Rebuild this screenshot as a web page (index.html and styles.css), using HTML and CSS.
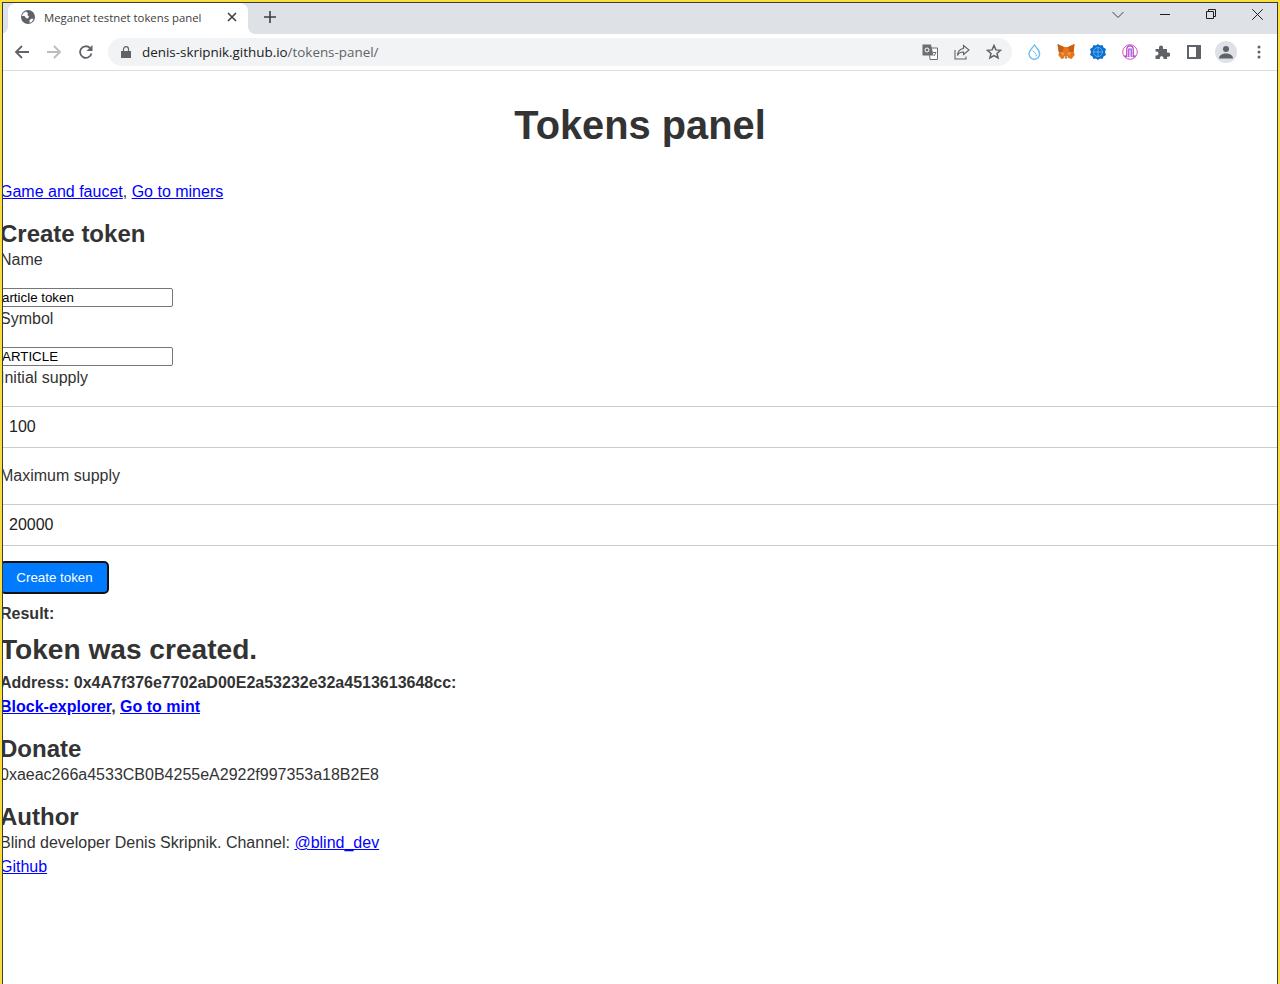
FILE: index.html
```html
<!DOCTYPE html>
<html lang="en">
<head>
<meta charset="utf-8">
<title>Meganet testnet tokens panel</title>
<link rel="stylesheet" href="styles.css">
</head>
<body>
<div class="window">
  <header class="tabstrip">
    <div class="tab">
      <svg class="favicon" viewBox="0 0 16 16" width="16" height="16"><circle cx="8" cy="8" r="7" fill="#5f6368"/><path d="M3 4.200 6 2.500l2 1.700-.6 1.800L9 7.500 8 9.500 6 9 4.500 7 2 7zM9.500 11l2.500-1.500 1.500.7-1.800 2.800-2 .8z" fill="#fff"/></svg>
      <span class="tab-title">Meganet testnet tokens panel</span>
      <svg class="tab-close" viewBox="0 0 10 10" width="10" height="10"><path d="M1 1l8 8M9 1l-8 8" stroke="#3c4043" stroke-width="1.600"/></svg>
    </div>
    <svg class="new-tab" viewBox="0 0 12 12" width="12" height="12"><path d="M6 0v12M0 6h12" stroke="#3c4043" stroke-width="1.600"/></svg>
    <div class="win-controls">
      <svg viewBox="0 0 12 12" width="12" height="12"><path d="M.5 3 6 8.500 11.500 3" fill="none" stroke="#3c4043"/></svg>
      <svg viewBox="0 0 10 10" width="10" height="10"><path d="M0 5.500h10" stroke="#1f1f1f"/></svg>
      <svg viewBox="0 0 10 10" width="10" height="10"><path d="M.5 2.500h7v7h-7zM2.500 2.500v-2h7v7h-2" fill="none" stroke="#1f1f1f"/></svg>
      <svg viewBox="0 0 10 10" width="11" height="11"><path d="M.2.2l9.600 9.600M9.800.2.200 9.800" stroke="#1f1f1f" stroke-width=".9"/></svg>
    </div>
  </header>
  <nav class="toolbar">
    <svg class="nav-icon" viewBox="0 0 16 16" width="16" height="16"><path d="M15 8H2M8 2 2 8l6 6" fill="none" stroke="#5f6368" stroke-width="1.800"/></svg>
    <svg class="nav-icon" viewBox="0 0 16 16" width="16" height="16"><path d="M1 8h13M8 2l6 6-6 6" fill="none" stroke="#babcbe" stroke-width="1.800"/></svg>
    <svg class="nav-icon" viewBox="0 0 16 16" width="16" height="16"><path d="M13.500 9.500A5.800 5.800 0 1 1 12 4" fill="none" stroke="#5f6368" stroke-width="1.800"/><path d="M14.500 1v6h-6z" fill="#5f6368"/></svg>
    <div class="omnibox">
      <svg viewBox="0 0 10 12" width="10" height="12"><path d="M0 5h10v7H0z" fill="#5f6368"/><path d="M2.500 5V3.200a2.500 2.500 0 0 1 5 0V5" fill="none" stroke="#5f6368" stroke-width="1.200"/></svg>
      <span class="url"><span class="host">denis-skripnik.github.io</span>/tokens-panel/</span>
      <div class="omni-actions">
        <svg viewBox="0 0 16 16" width="16" height="16"><path d="M7 4h8.500v11.500H8z" fill="#fff" stroke="#6b6f73"/><path d="M.5.500h8.500l2.500 11H.5z" fill="#6b6f73"/><circle cx="5" cy="6" r="2" fill="none" stroke="#fff"/><path d="M11 8.500h3M12 12l2-3.500" stroke="#6b6f73"/></svg>
        <svg viewBox="0 0 16 16" width="16" height="16"><path d="M9.500 1.500 15 6l-5.500 4.500V8C6.500 8 4.500 9 3.500 11.500c.3-4 2.500-6.500 6-7z" fill="none" stroke="#5f6368" stroke-width="1.100"/><path d="M1 6v9h11v-2.500" fill="none" stroke="#5f6368" stroke-width="1.100"/></svg>
        <svg viewBox="0 0 16 16" width="16" height="16"><path d="m8 1.500 1.900 4.400 4.700.4-3.600 3.100 1.100 4.600L8 11.600 3.900 14l1.100-4.600-3.600-3.100 4.700-.4z" fill="none" stroke="#5f6368" stroke-width="1.500"/></svg>
      </div>
    </div>
    <div class="extensions">
      <svg viewBox="0 0 16 16" width="16" height="16"><path d="M8.500 1C7 3.500 3 6 3 10a5.300 5.300 0 0 0 10.600 0c0-4-3.600-6.500-5.100-9z" fill="#fff" stroke="#6fbcf0" stroke-width="1.400"/><path d="M6.500 6.500c2 2 4.500 3 3.800 6" fill="none" stroke="#6fbcf0"/></svg>
      <svg class="fox" viewBox="0 0 18 16" width="18" height="16"><path d="M.5 0 7 3h4l6.500-3-.8 7.500 1 3.500-3.200 4-3-1H7.500l-3 1-3.200-4 1-3.500z" fill="#e8761f"/><path d="M.5 0 7 3 5.500 8 1.500 8zM17.500 0 11 3l1.500 5 4 0z" fill="#c65f14"/><path d="M4 8l3 1-1 3zM14 8l-3 1 1 3z" fill="#f5a55a"/><path d="M7 12l2 1 2-1v2H7z" fill="#e9d9c8"/><path d="M8 13.500h2l-1 1.500z" fill="#3b2a1e"/></svg>
      <svg viewBox="0 0 16 16" width="16" height="16"><path d="M8 0l2 1.500L12.500 1l1 2.500L16 5l-1 3 1 3-2.500 1.500-1 2.500-2.500-.5L8 16l-2-1.500-2.500.5-1-2.500L0 11l1-3-1-3 2.500-1.500 1-2.500L6 1.500z" fill="#0a6fd1"/><circle cx="8" cy="8" r="4.500" fill="none" stroke="#7fc1f0" stroke-width=".7"/><path d="M3.500 8h9M8 3.500v9" stroke="#7fc1f0" stroke-width=".7"/></svg>
      <svg viewBox="0 0 16 16" width="16" height="16"><circle cx="8" cy="8" r="7.300" fill="#fff" stroke="#d653c1"/><path d="M4.800 13V5a3.200 3.200 0 0 1 6.400 0v8M6.800 13V5h2.400v8M2.500 11.500 4.800 13M13.500 11.500 11.200 13" fill="none" stroke="#a63fd0" stroke-width="1.200"/></svg>
      <svg viewBox="0 0 16 16" width="16" height="16"><path d="M1.500 5H5V3.500a2 2 0 0 1 4 0V5h4v3.500h1.200a2.100 2.100 0 0 1 0 4.200H13V15H9.500v-1.200a1.900 1.900 0 0 0-3.700 0V15H1.500v-3.500h1a2 2 0 0 0 0-4h-1z" fill="#5f6368"/></svg>
      <svg class="panel-icon" viewBox="0 0 14 14" width="14" height="14"><path d="M0 0h14v14H0z" fill="#5f6368"/><path d="M2 2h7v10H2z" fill="#fff"/></svg>
      <div class="avatar"><svg viewBox="0 0 14 14" width="14" height="14"><circle cx="7" cy="4" r="3" fill="#5f6368"/><path d="M0 13.500c0-3.500 3.500-5 7-5s7 1.500 7 5z" fill="#5f6368"/></svg></div>
      <svg class="kebab" viewBox="0 0 4 14" width="4" height="14"><circle cx="2" cy="2" r="1.500" fill="#5f6368"/><circle cx="2" cy="7" r="1.500" fill="#5f6368"/><circle cx="2" cy="12" r="1.500" fill="#5f6368"/></svg>
    </div>
  </nav>
  <main class="page">
    <h1 class="title">Tokens panel</h1>
    <p class="links"><a href="#">Game and faucet</a>, <a href="#">Go to miners</a></p>
    <h2 class="section first">Create token</h2>
    <form class="form">
      <label class="label">Name</label>
      <input class="small-input" value="article token">
      <label class="label">Symbol</label>
      <input class="small-input" value="ARTICLE">
      <label class="label">Initial supply</label>
      <input class="wide-input" value="100">
      <label class="label">Maximum supply</label>
      <input class="wide-input" value="20000">
      <button class="submit" type="button">Create token</button>
    </form>
    <p class="result-label">Result:</p>
    <h2 class="created">Token was created.</h2>
    <p class="address">Address: 0x4A7f376e7702aD00E2a53232e32a4513613648cc:</p>
    <p class="address"><a href="#">Block-explorer</a>, <a href="#">Go to mint</a></p>
    <h2 class="section">Donate</h2>
    <p class="line">0xaeac266a4533CB0B4255eA2922f997353a18B2E8</p>
    <h2 class="section">Author</h2>
    <p class="line">Blind developer Denis Skripnik. Channel: <a href="#">@blind_dev</a></p>
    <p class="line"><a href="#">Github</a></p>
  </main>
  <div class="capture-frame"></div>
</div>
</body>
</html>
```
FILE: styles.css
```css
* { box-sizing: border-box; }
html, body { margin: 0; padding: 0; background: #fff; }
body { font-family: "Liberation Sans", Arial, sans-serif; color: #333; font-size: 16px; }
.window { position: relative; width: 1280px; height: 984px; overflow: hidden; background: #fff; }
.capture-frame { position: absolute; inset: 0; border: solid #f9de3c; border-width: 2px 2px 0 2px; pointer-events: none; }
.capture-frame::after { content: ""; position: absolute; inset: 0; border: solid #3a3a3a; border-width: 1px 1px 0 1px; }

.tabstrip { height: 34px; padding: 3px 0 0 8px; background: #dee1e6; display: flex; align-items: stretch; }
.tab { position: relative; width: 240px; height: 31px; background: #fff; border-radius: 8px 8px 0 0; display: flex; align-items: center; padding: 0 0 3px 12px; font: 11.350px "Open Sans", sans-serif; color: #3c4043; }
.tab::before, .tab::after { content: ""; position: absolute; bottom: 0; width: 8px; height: 8px; }
.tab::before { left: -8px; background: radial-gradient(circle at 0 0, transparent 8px, #fff 8px); }
.tab::after { right: -8px; background: radial-gradient(circle at 100% 0, transparent 8px, #fff 8px); }
.favicon { flex: none; }
.tab-title { margin-left: 8px; width: 178px; white-space: nowrap; }
.tab-close { flex: none; margin-left: 5px; }
.new-tab { margin: 8px 0 0 16px; }
.win-controls { margin-left: auto; display: flex; align-items: flex-start; gap: 36px; padding: 6px 17px 0 0; }

.toolbar { height: 37px; border-bottom: 1px solid #dadce0; display: flex; align-items: center; padding: 0 0 0 14px; gap: 16px; background: #fff; }
.omnibox { width: 904px; height: 28px; margin-left: -2px; border-radius: 14px; background: #f1f3f4; display: flex; align-items: center; padding: 0 10px 0 13px; margin-top: -1px; }
.url { margin-left: 11px; font: 13.400px "Open Sans", sans-serif; color: #5f6368; white-space: nowrap; }
.host { color: #202124; }
.omni-actions { margin-left: auto; display: flex; gap: 16px; }
.extensions { display: flex; align-items: center; gap: 16px; margin-left: -2px; }
.fox { margin: 0 -1px; }
.panel-icon { margin: 0 1px; }
.avatar { width: 22px; height: 22px; margin: 0 -3px; border-radius: 50%; background: #dee1e6; display: flex; align-items: center; justify-content: center; }
.kebab { margin-left: 7px; }

.page { padding: 0; line-height: 24px; }
.title { margin: 29px 0 0; font-size: 39.800px; line-height: 50px; text-align: center; }
.links { margin: 30px 0 0; }
a { color: #00f; }
.section { margin: 15px 0 0; font-size: 24px; line-height: 29px; }
.form { display: flex; flex-direction: column; align-items: flex-start; margin-top: 0; }
.label { display: block; height: 24px; }
.small-input { width: 173px; height: 19px; margin: 16px 0 0; padding: 0 0 0 1px; border: 1px solid #767676; border-radius: 2px; font: 13.333px "Liberation Sans", sans-serif; color: #000; }
.wide-input { width: 1277px; height: 42px; margin: 16px 0; padding: 0 9px; border: 0; border-top: 1px solid #ccc; border-bottom: 1px solid #ccc; font: 16px "Liberation Sans", sans-serif; color: #222; }
.submit { height: 33px; width: 109px; margin-top: -1px; padding: 0; background: #007bff; color: #fff; border: 2px solid #111; border-radius: 5px; font: 13.333px "Liberation Sans", sans-serif; }
.result-label { margin: 8px 0 0; font-weight: bold; }
.created { margin: 7px 0 0; font-size: 28.100px; line-height: 34px; }
.address { margin: 0; font-weight: bold; }
.created + .address { margin-top: 4px; }
.line { margin: 0; }
```
